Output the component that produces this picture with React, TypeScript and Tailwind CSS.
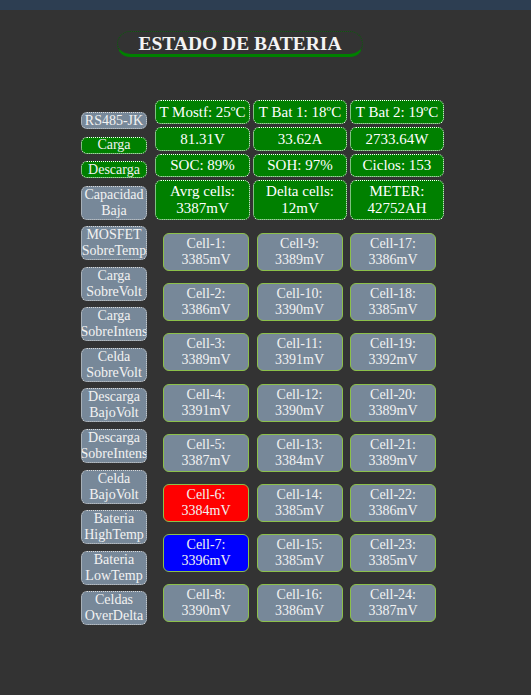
import React from 'react';

const SERIF = { fontFamily: '"Liberation Serif", "Times New Roman", serif' };

// status flags on the left
const FLAGS: { text: string[]; on?: boolean }[] = [
  { text: ['RS485-JK'] },
  { text: ['Carga'], on: true },
  { text: ['Descarga'], on: true },
  { text: ['Capacidad', 'Baja'] },
  { text: ['MOSFET', 'SobreTemp'] },
  { text: ['Carga', 'SobreVolt'] },
  { text: ['Carga', 'SobreIntens'] },
  { text: ['Celda', 'SobreVolt'] },
  { text: ['Descarga', 'BajoVolt'] },
  { text: ['Descarga', 'SobreIntens'] },
  { text: ['Celda', 'BajoVolt'] },
  { text: ['Bateria', 'HighTemp'] },
  { text: ['Bateria', 'LowTemp'] },
  { text: ['Celdas', 'OverDelta'] },
];

const SUMMARY: string[][] = [
  ['T Mostf: 25ºC', 'T Bat 1: 18ºC', 'T Bat 2: 19ºC'],
  ['81.31V', '33.62A', '2733.64W'],
  ['SOC: 89%', 'SOH: 97%', 'Ciclos: 153'],
  ['Avrg cells:\n3387mV', 'Delta cells:\n12mV', 'METER:\n42752AH'],
];

const CELLS = [
  3385, 3386, 3389, 3391, 3387, 3384, 3396, 3390,
  3389, 3390, 3391, 3390, 3384, 3385, 3385, 3386,
  3386, 3385, 3392, 3389, 3389, 3386, 3385, 3387,
];

// index of the lowest / highest cell (Cell-6, Cell-7)
const MIN_CELL = 5;
const MAX_CELL = 6;

const App: React.FC = () => {
  // rows of the cell grid: row i holds cells i+1, i+9, i+17
  const rows = Array.from({ length: 8 }, (_, i) => [i, i + 8, i + 16]);

  return (
    <div className="min-h-screen bg-[#333333] text-white" style={SERIF}>
      {/* top strip */}
      <div className="h-[10px] bg-[#2d3e52]" />

      {/* Title */}
      <div className="pl-[117px] pt-[21px]">
        <div className="w-[246px] h-[26px] rounded-full border border-dotted border-[#0b5e0b] border-b-[3px] border-b-[#008000] [border-bottom-style:solid] flex items-center justify-center">
          <h1 className="text-[19.5px] font-bold leading-none text-[#f4f4f4] pt-[2px]">ESTADO DE BATERIA</h1>
        </div>
      </div>

      <div className="flex pl-[81px] pt-[43px] gap-[8px]">
        {/* Flags column */}
        <aside className="w-[66px] flex flex-col pt-[12px]">
          {FLAGS.map((f, i) => {
            const two = f.text.length > 1;
            const mt = i === 0 ? '' : i < 4 ? 'mt-[7.5px]' : 'mt-[6.6px]';
            return (
              <div
                key={i}
                className={`${mt} ${two ? 'h-[34px]' : 'h-[17px]'} rounded-[6px] border border-dotted ${
                  f.on ? 'bg-[#008000] border-white' : 'bg-[#778899] border-[#d8d8d8]'
                } flex flex-col items-center justify-center text-[14px] leading-[16px] text-[#f2f2f2] whitespace-nowrap overflow-hidden`}
              >
                {f.text.map(t => (
                  <span key={t}>{t}</span>
                ))}
              </div>
            );
          })}
        </aside>

        {/* Right side */}
        <main className="flex flex-col">
          <div className="grid grid-cols-[95px_94px_94px] gap-[3px]">
            {SUMMARY.map((row, r) =>
              row.map((txt, c) => (
                <div
                  key={`${r}-${c}`}
                  className={`${r === 3 ? 'h-[40px]' : r === 2 ? 'h-[23px]' : 'h-[24px]'} bg-[#008000] border border-dotted border-white rounded-[6px] flex flex-col items-center justify-center text-[15px] leading-[17px] text-white whitespace-nowrap`}
                >
                  {txt.split('\n').map(t => (
                    <span key={t}>{t}</span>
                  ))}
                </div>
              ))
            )}
          </div>

          <div className="pl-[8px] pt-[13px] flex flex-col gap-[12.2px]">
            {rows.map((row, r) => (
              <div key={r} className="flex gap-[7.5px]">
                {row.map(idx => {
                  const bg =
                    idx === MIN_CELL ? 'bg-[#ff0000]' : idx === MAX_CELL ? 'bg-[#0000ff]' : 'bg-[#778899]';
                  return (
                    <div
                      key={idx}
                      className={`w-[86px] h-[38px] ${bg} border border-[#8cc04a] rounded-[6px] flex flex-col items-center justify-center text-[14px] leading-[16px] text-[#f2f2f2]`}
                    >
                      <span>Cell-{idx + 1}:</span>
                      <span>{CELLS[idx]}mV</span>
                    </div>
                  );
                })}
              </div>
            ))}
          </div>
        </main>
      </div>
    </div>
  );
};

export default App;
